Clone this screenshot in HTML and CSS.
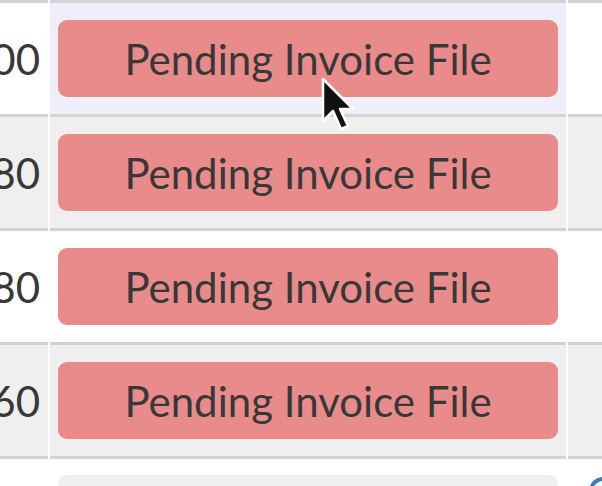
FILE: index.html
```html
<!DOCTYPE html>
<html lang="en">
  <head>
    <meta charset="UTF-8" />
    <meta name="viewport" content="width=device-width, initial-scale=1.0" />
    <title>Invoices</title>
    <link rel="stylesheet" href="styles.css">
  </head>
  <body>
    <div class="table-wrap">
      <table class="invoices">
        <colgroup>
          <col class="col-amount" />
          <col class="col-status" />
          <col class="col-actions" />
        </colgroup>
        <tbody>
          <tr class="hover">
            <td class="amount"><span>1,200</span></td>
            <td class="status"><button class="pending">Pending Invoice File</button></td>
            <td class="actions"></td>
          </tr>
          <tr class="striped">
            <td class="amount"><span>480</span></td>
            <td class="status"><button class="pending">Pending Invoice File</button></td>
            <td class="actions"></td>
          </tr>
          <tr>
            <td class="amount"><span>380</span></td>
            <td class="status"><button class="pending">Pending Invoice File</button></td>
            <td class="actions"></td>
          </tr>
          <tr class="striped">
            <td class="amount"><span>260</span></td>
            <td class="status"><button class="pending">Pending Invoice File</button></td>
            <td class="actions"></td>
          </tr>
          <tr class="last">
            <td class="amount"></td>
            <td class="status"><button class="neutral">&nbsp;</button></td>
            <td class="actions"><span class="icon-dot"></span></td>
          </tr>
        </tbody>
      </table>

      <svg class="cursor" width="34" height="56" viewBox="0 0 34 56">
        <path d="M2 2 L2 44 L12 34 L20 52 L27 49 L19 32 L32 32 Z" fill="#111" stroke="#fff" stroke-width="2.5" stroke-linejoin="round" />
      </svg>
    </div>
  </body>
</html>
```

FILE: styles.css
```css
body {
  margin: 0;
  padding: 0;
  background-color: white;
  font-family: 'Lato', 'Liberation Sans', sans-serif;
  overflow: hidden;
}

.table-wrap {
  position: relative;
  width: 602px;
  height: 486px;
  overflow: hidden;
}

.invoices {
  table-layout: fixed;
  width: 612px;
  border-collapse: separate;
  border-spacing: 2px 0;
  margin-left: -2px;
  background-color: white;
}

.col-amount {
  width: 48px;
}

.col-status {
  width: 516px;
}

.col-actions {
  width: 40px;
}

.invoices td {
  border-top: 3px solid #d3d3d3;
  height: 114px;
  padding: 0;
  vertical-align: middle;
  box-sizing: border-box;
}

.amount {
  font-size: 42px;
  color: #383838;
  white-space: nowrap;
  overflow: hidden;
}

.amount span {
  display: flex;
  justify-content: flex-end;
  margin-right: 8px;
}

.status {
  padding: 0 8px !important;
}

.hover .status {
  background-color: #efeefb;
}

.striped td {
  background-color: #efefef;
}

button {
  display: block;
  width: 100%;
  height: 77px;
  border: none;
  border-radius: 9px;
  font-family: 'Lato', 'Liberation Sans', sans-serif;
  font-size: 42px;
  color: #383838;
  cursor: pointer;
  padding: 0;
}

.pending {
  background-color: #ea8b8b;
}

.neutral {
  background-color: #efefef;
}

.last td {
  vertical-align: top;
}

.last .status {
  padding-top: 16px !important;
}

.icon-dot {
  display: block;
  width: 28px;
  height: 28px;
  margin: 18px 0 0 21px;
  border-radius: 50%;
  border: 4px solid #3b7fc4;
  box-sizing: border-box;
}

.cursor {
  position: absolute;
  left: 321px;
  top: 77px;
}
```
